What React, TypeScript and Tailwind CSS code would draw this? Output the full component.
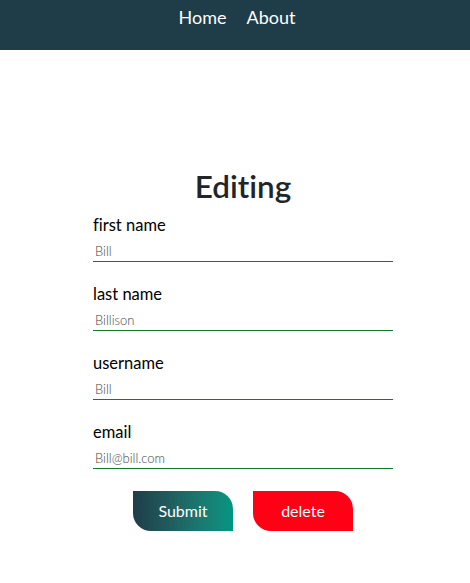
import React from "react";

const font = { fontFamily: "Lato, 'Noto Sans', sans-serif" };

function Field({ label, value }: { label: string; value: string }) {
  return (
    <div className="flex flex-col mb-[21px]">
      <label className="text-[16.5px] leading-[22px] text-black">{label}</label>
      <input
        defaultValue={value}
        className="h-[26px] text-[13px] font-light text-[#444] pl-[2px] pt-[5px] border-b border-[#13782b] outline-none bg-transparent"
        style={font}
      />
    </div>
  );
}

export default function App() {
  return (
    <div className="min-h-[583px] bg-white [font-variant-ligatures:none]" style={font}>
      <nav className="h-[50px] bg-[#1e3d48] flex justify-center pt-[5px] pl-[4px] gap-[20px]">
        <a className="text-[18px] leading-[24px] text-white">Home</a>
        <a className="text-[18px] leading-[24px] text-white">About</a>
      </nav>
      <div className="flex justify-center pl-[16px]">
        <div className="w-[300px] flex flex-col mt-[116px]">
          <h1 className="text-[31.5px] leading-[40px] font-semibold text-[#212529] text-center mb-[8px]">
            Editing
          </h1>
          <Field label="first name" value="Bill" />
          <Field label="last name" value="Billison" />
          <Field label="username" value="Bill" />
          <Field label="email" value="Bill@bill.com" />
          <div className="flex justify-center gap-[20px] mt-[1px]">
            <button className="w-[100px] h-[40px] rounded-tr-[18px] rounded-bl-[18px] text-white text-[16px] bg-gradient-to-r from-[#1f3d4a] to-[#009782]">
              Submit
            </button>
            <button className="w-[100px] h-[40px] rounded-tr-[18px] rounded-bl-[18px] text-white text-[16px] bg-[#ff0015]">
              delete
            </button>
          </div>
        </div>
      </div>
    </div>
  );
}
